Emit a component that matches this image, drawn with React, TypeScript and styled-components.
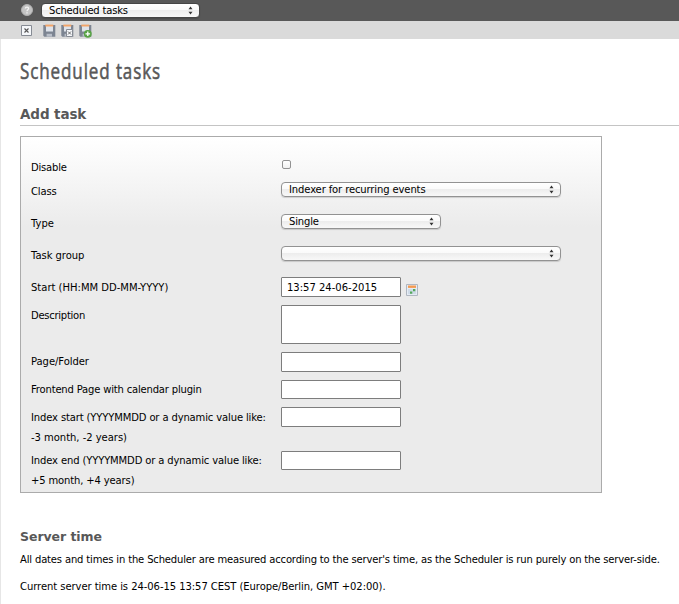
import React from "react";
import styled, { createGlobalStyle } from "styled-components";

const Global = createGlobalStyle`
  * { box-sizing: border-box; }
  body { margin: 0; background: #fff; color: #000; font-family: "DejaVu Sans", Verdana, sans-serif; font-size: 10px; }
`;

const Page = styled.div`
  width: 679px;
  height: 604px;
  overflow: hidden;
  display: flex;
  flex-direction: column;
`;

const TopBar = styled.header`
  height: 21px;
  flex: none;
  background: #585858;
  display: flex;
  align-items: flex-start;
  padding: 3px 0 0 21px;
`;

const HelpIcon = styled.svg`
  width: 12px;
  height: 12px;
  margin: 1px 8px 0 0;
`;

const ToolBar = styled.div`
  height: 18px;
  flex: none;
  background: #dadada;
  display: flex;
  align-items: flex-start;
  padding: 3px 0 0 20px;
`;

const ToolIcon = styled.svg<{ $gap: number }>`
  width: 14px;
  height: 14px;
  flex: none;
  margin-right: ${(p) => p.$gap}px;
`;

const Body = styled.main`
  flex: 1;
  border-left: 1px solid #e6e6e6;
  padding-left: 19px;
`;

const Title = styled.h1`
  margin: 16px 0 0;
  height: 32px;
  width: max-content;
  font: 400 21px/32px "Open Sans", sans-serif;
  letter-spacing: 1.1px;
  color: #585858;
  -webkit-text-stroke: 0.55px #585858;
  transform: scaleX(0.81);
  transform-origin: left;
`;

const SectionTitle = styled.h2<{ $size: number; $spacing: number }>`
  margin: 0;
  font-size: ${(p) => p.$size}px;
  line-height: 20px;
  letter-spacing: ${(p) => p.$spacing}px;
  font-weight: 700;
  color: #585858;
`;

const AddHeader = styled.div`
  margin-top: 17px;
  height: 22px;
  border-bottom: 1px solid #c4c4c4;
`;

const Panel = styled.form`
  margin: 10px 0 0;
  width: 582px;
  height: 357px;
  border: 1px solid #ababab;
  background: linear-gradient(#fff 0, #fbfbfb 20px, #ebebeb 90px);
  padding: 18px 10px 0;
`;

const Row = styled.div<{ $height: number }>`
  height: ${(p) => p.$height}px;
  display: grid;
  grid-template-columns: 250px 1fr;
  align-items: start;
`;

const Label = styled.label`
  padding-top: 3px;
  line-height: 20px;
`;

const LabelLine = styled.span<{ $spacing: number }>`
  display: block;
  width: max-content;
  letter-spacing: ${(p) => p.$spacing}px;
`;

const Field = styled.div<{ $top: number }>`
  padding-top: ${(p) => p.$top}px;
  display: flex;
  align-items: flex-start;
`;

const Select = styled.div<{ $width: number; $dark?: boolean }>`
  width: ${(p) => p.$width}px;
  height: 15px;
  border: 1px solid ${(p) => (p.$dark ? "#454545" : "#929292")};
  border-radius: 4px;
  background: linear-gradient(#fff 0, #fafafa 45%, #ededed 50%, #f8f8f8 100%);
  box-shadow: 0 1px 1px rgba(0, 0, 0, 0.15);
  display: flex;
  align-items: center;
  justify-content: space-between;
  padding: 0 6px 0 7px;
  line-height: 13px;
`;

const Arrows = styled.svg`
  width: 5px;
  height: 9px;
`;

const Checkbox = styled.div`
  width: 9px;
  height: 9px;
  margin-left: 1px;
  border: 1px solid #929292;
  border-radius: 2px;
  background: linear-gradient(#fff, #f1f1f1);
`;

const Input = styled.div<{ $height: number }>`
  width: 120px;
  height: ${(p) => p.$height}px;
  border: 1px solid #7d7d7d;
  border-radius: 1px;
  background: #fff;
  padding-left: 5px;
  line-height: 19px;
`;

const CalendarIcon = styled.svg`
  width: 12px;
  height: 12px;
  margin: 7px 0 0 5px;
`;

const Server = styled.section`
  margin-top: 34px;
`;

const Paragraph = styled.p<{ $top: number; $spacing: number }>`
  margin: ${(p) => p.$top}px 0 0;
  line-height: 16px;
  width: max-content;
  letter-spacing: ${(p) => p.$spacing}px;
`;

const Text = styled.span<{ $spacing: number }>`
  letter-spacing: ${(p) => p.$spacing}px;
`;

function PopUp({ width, text = "", spacing = 0, dark }: { width: number; text?: string; spacing?: number; dark?: boolean }) {
  return (
    <Select $width={width} $dark={dark}>
      <Text $spacing={spacing}>{text}</Text>
      <Arrows viewBox="0 0 5 9" fill="#333">
        <path d="M2.5 0.5 4.5 3.2H.5zM.5 5.8h4L2.5 8.5z" />
      </Arrows>
    </Select>
  );
}

function Floppy() {
  return (
    <>
      <path d="M1.3 1h12v11.7H2.3l-1-1z" fill="#7d8592" />
      <path d="M4 1h7v6.5H4z" fill="#dfe3ea" />
      <path d="M3.3 .6h8v1.9h-8z" fill="#f3a468" />
      <path d="M4.6 9.8h5.4v2.9H4.6z" fill="#b9bfc9" />
    </>
  );
}

interface FieldRow {
  height: number;
  fieldTop: number;
  lines: [string, number][];
  field: React.ReactNode;
}

const rows: FieldRow[] = [
  { height: 24, fieldTop: 5, lines: [["Disable", -0.2]], field: <Checkbox /> },
  { height: 32, fieldTop: 3, lines: [["Class", -0.15]], field: <PopUp width={280} text="Indexer for recurring events" spacing={-0.12} /> },
  { height: 32, fieldTop: 3, lines: [["Type", 0]], field: <PopUp width={160} text="Single" spacing={-0.15} /> },
  { height: 32, fieldTop: 3, lines: [["Task group", -0.05]], field: <PopUp width={280} /> },
  {
    height: 28,
    fieldTop: 2,
    lines: [["Start (HH:MM DD-MM-YYYY)", 0]],
    field: (
      <>
        <Input $height={20}><Text $spacing={0}>13:57 24-06-2015</Text></Input>
        <CalendarIcon viewBox="0 0 12 12">
          <path d="M.5.5h11v11H.5z" fill="#e5ecf4" stroke="#b0b7c1" />
          <path d="M2 1.5h8v2.4H2z" fill="#f49a50" />
          <path d="M2 5h8v5H2z" fill="#cfdbe8" />
          <path d="M7 5h2.3v2.3H7zM4 7.5h2.3v2.3H4z" fill="#55a95b" />
        </CalendarIcon>
      </>
    ),
  },
  { height: 46, fieldTop: 2, lines: [["Description", -0.27]], field: <Input $height={39} /> },
  { height: 28, fieldTop: 3, lines: [["Page/Folder", -0.05]], field: <Input $height={20} /> },
  { height: 28, fieldTop: 3, lines: [["Frontend Page with calendar plugin", -0.18]], field: <Input $height={19} /> },
  { height: 43, fieldTop: 2, lines: [["Index start (YYYYMMDD or a dynamic value like:", -0.135], ["-3 month, -2 years)", -0.03]], field: <Input $height={20} /> },
  { height: 43, fieldTop: 3, lines: [["Index end (YYYYMMDD or a dynamic value like:", -0.13], ["+5 month, +4 years)", -0.14]], field: <Input $height={19} /> },
];

export default function App() {
  return (
    <Page>
      <Global />
      <TopBar>
        <HelpIcon viewBox="0 0 12 12">
          <circle cx="6" cy="6" r="5.5" fill="#c4c4c4" stroke="#b0b0b0" />
          <path d="M4.3 4.5C4.4 2.5 7.7 2.6 7.6 4.5 7.5 5.7 6 5.7 6 7.2M6 8.3v1.3" fill="none" stroke="#f4f4f4" strokeWidth="1.3" />
        </HelpIcon>
        <PopUp width={159} text="Scheduled tasks" spacing={-0.2} dark />
      </TopBar>
      <ToolBar>
        <ToolIcon $gap={8} viewBox="0 0 14 14">
          <path d="M1.5 1.5h10v10h-10z" fill="#f5f7fa" stroke="#868b94" />
          <path d="m4.5 4.5 4 4m0-4-4 4" stroke="#555" strokeWidth="1.1" />
        </ToolIcon>
        <ToolIcon $gap={4} viewBox="0 0 14 14"><Floppy /></ToolIcon>
        <ToolIcon $gap={4} viewBox="0 0 14 14">
          <Floppy />
          <path d="M6.5 5.5h6v7h-6z" fill="#f5f7fa" stroke="#868b94" />
          <path d="m8 7.5 3 3m0-3-3 3" stroke="#666" />
        </ToolIcon>
        <ToolIcon $gap={0} viewBox="0 0 14 14">
          <Floppy />
          <circle cx="9.8" cy="9.8" r="3.9" fill="#57a244" />
          <path d="M9.8 7.5v4.6M7.5 9.8h4.6" stroke="#fff" strokeWidth="1.3" />
        </ToolIcon>
      </ToolBar>
      <Body>
        <Title>Scheduled tasks</Title>
        <AddHeader>
          <SectionTitle $size={13.5} $spacing={-0.1}>Add task</SectionTitle>
        </AddHeader>
        <Panel>
          {rows.map((r) => (
            <Row key={r.lines[0][0]} $height={r.height}>
              <Label>
                {r.lines.map(([t, s]) => <LabelLine key={t} $spacing={s}>{t}</LabelLine>)}
              </Label>
              <Field $top={r.fieldTop}>{r.field}</Field>
            </Row>
          ))}
        </Panel>
        <Server>
          <SectionTitle $size={12.5} $spacing={-0.05}>Server time</SectionTitle>
          <Paragraph $top={5} $spacing={-0.157}>
            All dates and times in the Scheduler are measured according to the server's time, as the Scheduler is run purely on the server-side.
          </Paragraph>
          <Paragraph $top={11} $spacing={-0.06}>Current server time is 24-06-15 13:57 CEST (Europe/Berlin, GMT +02:00).</Paragraph>
        </Server>
      </Body>
    </Page>
  );
}
